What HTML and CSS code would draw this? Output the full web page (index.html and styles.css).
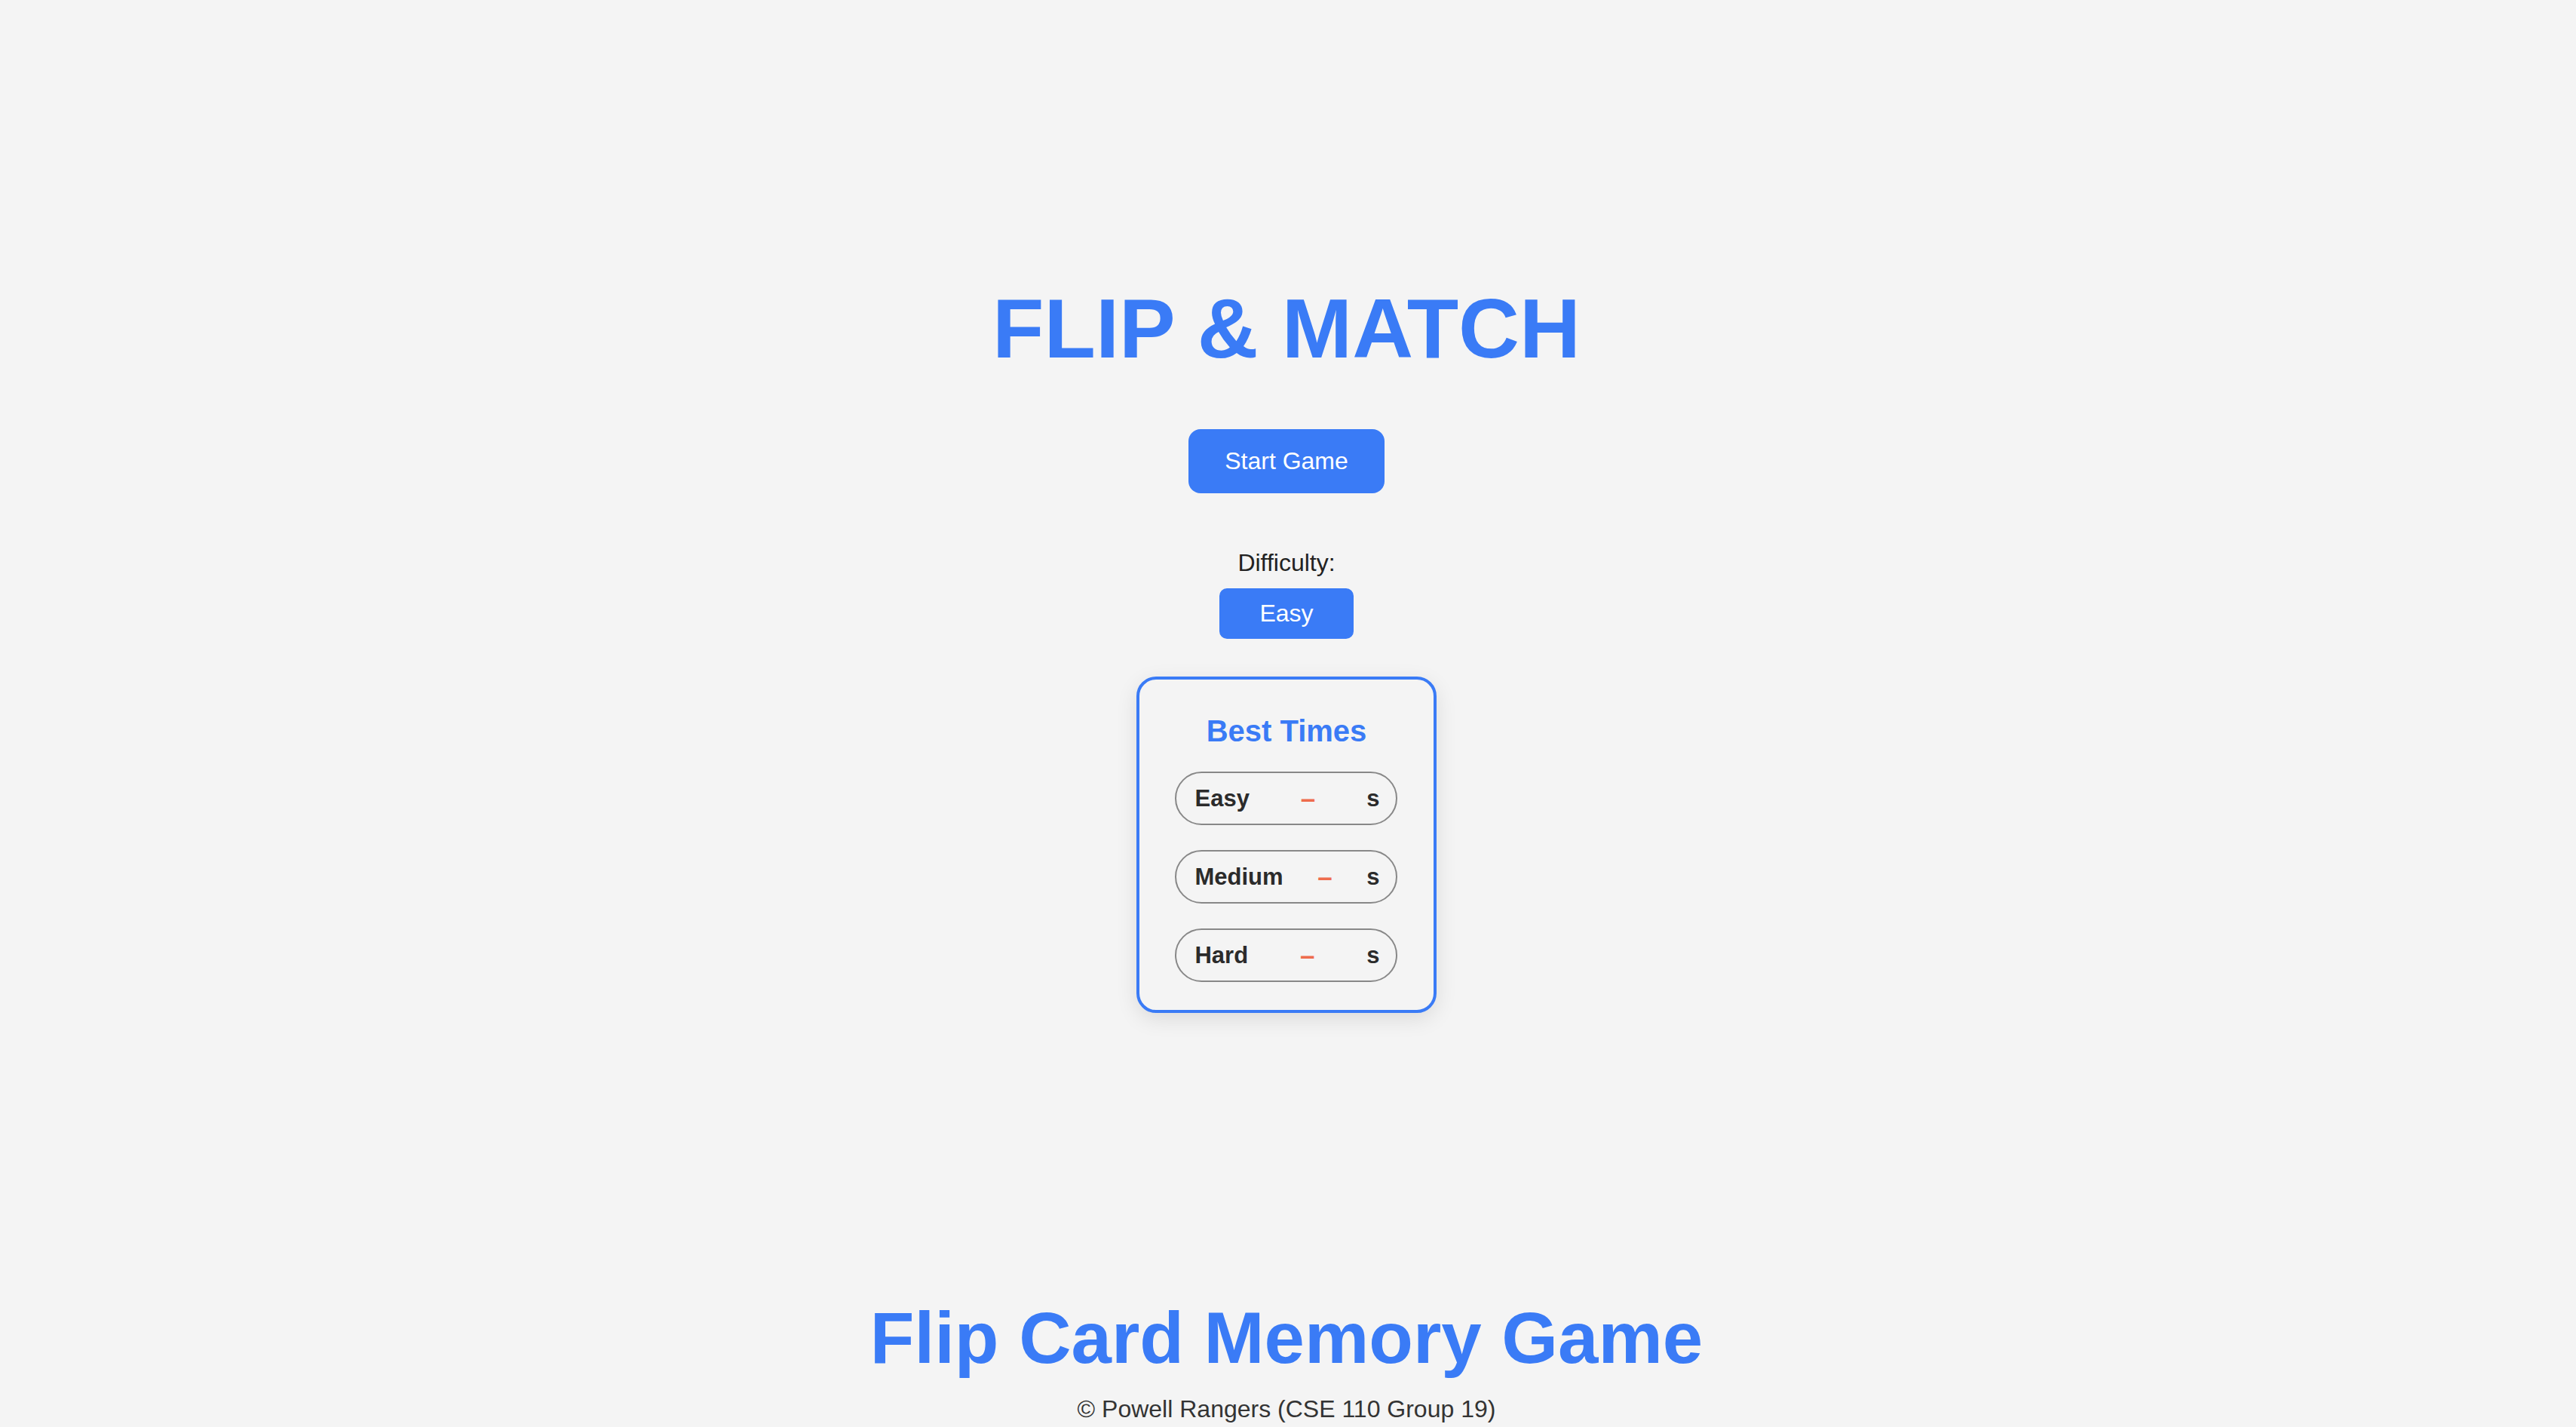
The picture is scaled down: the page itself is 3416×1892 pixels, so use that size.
FILE: index.html
```html
<!DOCTYPE html>
<html lang="en">
<head>
<meta charset="utf-8">
<title>Flip &amp; Match</title>
<link rel="stylesheet" href="styles.css">
</head>
<body>
<main class="home">
  <h1 class="title">FLIP &amp; MATCH</h1>
  <button class="start-btn">Start Game</button>
  <div class="difficulty">
    <span class="difficulty-label">Difficulty:</span>
    <button class="difficulty-btn">Easy</button>
  </div>
  <section class="best-times">
    <h2 class="best-title">Best Times</h2>
    <ul class="times-list">
      <li class="time-row"><span class="level">Easy</span><span class="value">–</span><span class="unit">s</span></li>
      <li class="time-row"><span class="level">Medium</span><span class="value">–</span><span class="unit">s</span></li>
      <li class="time-row"><span class="level">Hard</span><span class="value">–</span><span class="unit">s</span></li>
    </ul>
  </section>
</main>
<footer class="footer">
  <h2 class="footer-title">Flip Card Memory Game</h2>
  <p class="copyright">© Powell Rangers (CSE 110 Group 19)</p>
</footer>
</body>
</html>
```

FILE: styles.css
```css
html, body {
  margin: 0;
  padding: 0;
}

body {
  background: #f4f4f4;
  color: #333333;
  font-family: "Liberation Sans", Arial, Helvetica, sans-serif;
  min-height: 100vh;
  box-sizing: border-box;
  padding-right: 4px;
  display: flex;
  flex-direction: column;
  align-items: center;
}

.home {
  display: flex;
  flex-direction: column;
  align-items: center;
  padding-top: 372px;
}

.title {
  margin: 0;
  font-size: 112px;
  line-height: 128px;
  font-weight: 700;
  color: #3a7bf6;
}

.start-btn {
  margin-top: 69px;
  height: 85px;
  padding: 0 48px;
  border: none;
  border-radius: 16px;
  background: #3a7bf6;
  color: #ffffff;
  font-family: inherit;
  font-size: 32px;
  line-height: 37px;
}

.difficulty {
  margin-top: 74px;
  display: flex;
  flex-direction: column;
  align-items: center;
  gap: 15px;
}

.difficulty-label {
  font-size: 32px;
  line-height: 37px;
  color: #222222;
}

.difficulty-btn {
  width: 178px;
  height: 67px;
  border: none;
  border-radius: 10px;
  background: #3a7bf6;
  color: #ffffff;
  font-family: inherit;
  font-size: 32px;
  line-height: 37px;
}

.best-times {
  margin-top: 50px;
  box-sizing: border-box;
  width: 398px;
  height: 446px;
  border: 4px solid #3a7bf6;
  border-radius: 26px;
  box-shadow: 0 8px 28px rgba(0, 0, 0, 0.10);
  display: flex;
  flex-direction: column;
  align-items: center;
  padding-top: 45px;
}

.best-title {
  margin: 0;
  font-size: 40px;
  line-height: 46px;
  font-weight: 700;
  color: #3a7bf6;
}

.times-list {
  list-style: none;
  margin: 31px 0 0;
  padding: 0;
  display: flex;
  flex-direction: column;
  gap: 33px;
}

.time-row {
  box-sizing: border-box;
  width: 295px;
  height: 71px;
  border: 2px solid #888888;
  border-radius: 36px;
  padding: 0 22px 0 24px;
  display: flex;
  align-items: center;
  justify-content: space-between;
  font-size: 31px;
  line-height: 36px;
  font-weight: 700;
  color: #2b2b2b;
}

.value {
  color: #ee6c4d;
  font-size: 35px;
}

.footer {
  margin-top: auto;
  display: flex;
  flex-direction: column;
  align-items: center;
  padding-bottom: 5px;
}

.footer-title {
  margin: 0;
  font-size: 96px;
  line-height: 110px;
  font-weight: 700;
  color: #3a7bf6;
}

.copyright {
  margin: 21px 0 0;
  font-size: 32px;
  line-height: 37px;
  color: #333333;
}
```
